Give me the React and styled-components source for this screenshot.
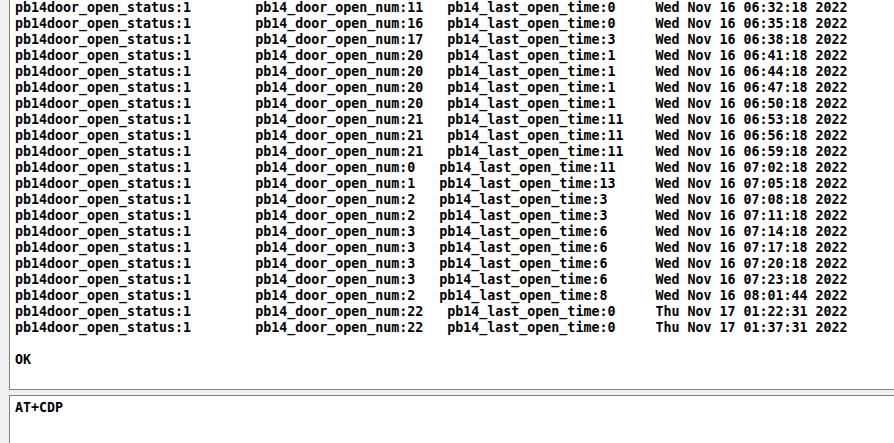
import React from 'react';
import styled, { createGlobalStyle } from 'styled-components';

const GlobalStyle = createGlobalStyle`
  html, body {
    margin: 0;
    padding: 0;
    width: 894px;
    height: 443px;
    overflow: hidden;
    background: #f0f0f0;
  }
`;

const Window = styled.div`
  display: flex;
  flex-direction: column;
  gap: 5px;
  width: 894px;
  height: 443px;
  padding-left: 9px;
  box-sizing: border-box;
  background: #f0f0f0;
`;

const Panel = styled.div`
  flex: ${(props) => (props.top ? '1 1 auto' : '0 0 auto')};
  background: #ffffff;
  border-left: 1px solid #828282;
  border-top: ${(props) => (props.top ? '1px solid #828282' : 'none')};
  border-bottom: ${(props) => (props.top ? 'none' : '1px solid #828282')};
  margin-right: -20px;
  padding: ${(props) => (props.top ? '4px 0 0 5px' : '0 0 0 5px')};
  height: ${(props) => (props.height ? `${props.height}px` : 'auto')};
  box-sizing: border-box;
  overflow: hidden;
`;

const Text = styled.pre`
  margin: 0;
  font-family: "DejaVu Sans Mono", "Liberation Mono", monospace;
  font-weight: bold;
  font-size: 13.3px;
  line-height: 16px;
  color: #000000;
  white-space: pre;
`;

const rows = [
  [11, 0, 'Wed Nov 16 06:32:18 2022'],
  [16, 0, 'Wed Nov 16 06:35:18 2022'],
  [17, 3, 'Wed Nov 16 06:38:18 2022'],
  [20, 1, 'Wed Nov 16 06:41:18 2022'],
  [20, 1, 'Wed Nov 16 06:44:18 2022'],
  [20, 1, 'Wed Nov 16 06:47:18 2022'],
  [20, 1, 'Wed Nov 16 06:50:18 2022'],
  [21, 11, 'Wed Nov 16 06:53:18 2022'],
  [21, 11, 'Wed Nov 16 06:56:18 2022'],
  [21, 11, 'Wed Nov 16 06:59:18 2022'],
  [0, 11, 'Wed Nov 16 07:02:18 2022'],
  [1, 13, 'Wed Nov 16 07:05:18 2022'],
  [2, 3, 'Wed Nov 16 07:08:18 2022'],
  [2, 3, 'Wed Nov 16 07:11:18 2022'],
  [3, 6, 'Wed Nov 16 07:14:18 2022'],
  [3, 6, 'Wed Nov 16 07:17:18 2022'],
  [3, 6, 'Wed Nov 16 07:20:18 2022'],
  [3, 6, 'Wed Nov 16 07:23:18 2022'],
  [2, 8, 'Wed Nov 16 08:01:44 2022'],
  [22, 0, 'Thu Nov 17 01:22:31 2022'],
  [22, 0, 'Thu Nov 17 01:37:31 2022'],
];

const line = ([num, time, date]) => {
  const head = 'pb14door_open_status:1'.padEnd(30, ' ');
  const mid = `pb14_door_open_num:${num}   `;
  const last = `pb14_last_open_time:${time}`.padEnd(80 - head.length - mid.length, ' ');
  return head + mid + last + date;
};

const log = `${rows.map(line).join('\n')}\n\nOK`;

const App = () => (
  <>
    <GlobalStyle />
    <Window>
      <Panel height={390}>
        <Text>{log}</Text>
      </Panel>
      <Panel top>
        <Text>AT+CDP</Text>
      </Panel>
    </Window>
  </>
);

export default App;
